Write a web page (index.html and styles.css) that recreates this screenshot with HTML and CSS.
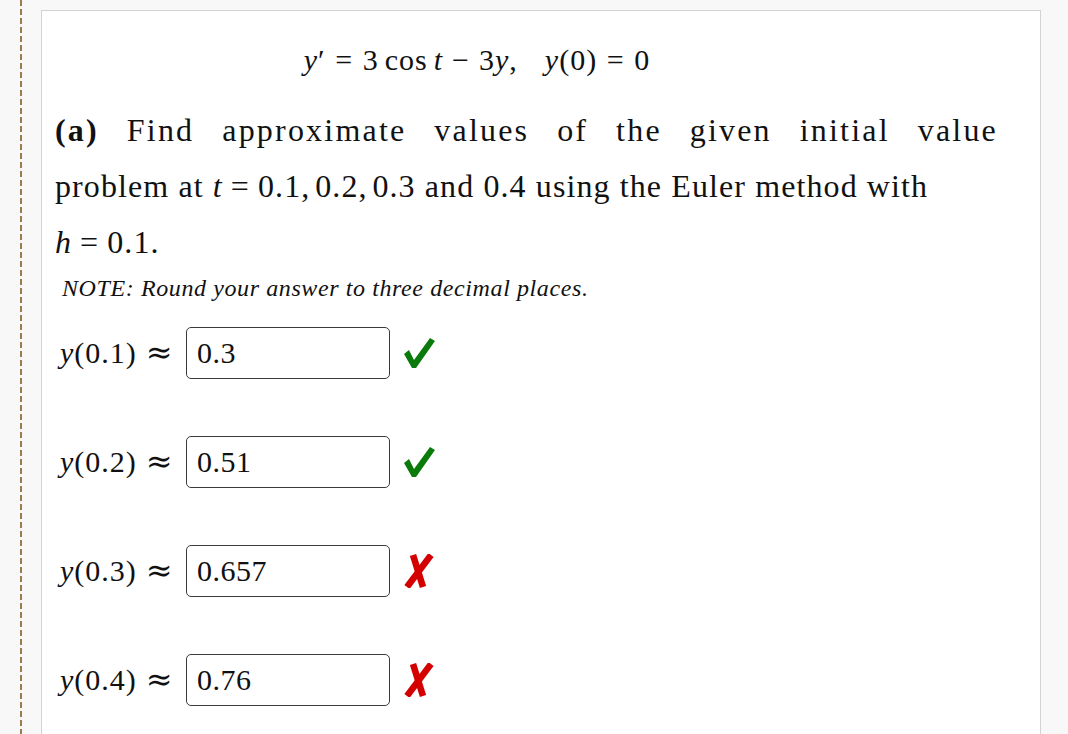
FILE: index.html
```html
<!DOCTYPE html>
<html>
<head>
<meta charset="utf-8">
<link rel="stylesheet" href="styles.css">
</head>
<body>
<div class="page">
  <div class="gutter"><div class="dashes"></div></div>
  <div class="card">
    <div class="equation"><i>y</i>′<span class="rel">=</span>3<span class="sp"></span>cos<span class="sp"></span><i>t</i><span class="bin">−</span>3<i>y</i>,<span class="wide"></span><i>y</i>(0)<span class="rel">=</span>0</div>
    <div class="question">
      <span class="line line1"><b>(a)</b> Find approximate values of the given initial value</span>
      <span class="line line2">problem at <i>t</i><span class="rel2">=</span>0.1,<span class="thin"></span>0.2,<span class="thin"></span>0.3 and 0.4 using the Euler method with</span>
      <span class="line line3"><i>h</i><span class="rel2">=</span>0.1.</span>
    </div>
    <p class="note">NOTE: Round your answer to three decimal places.</p>
    <div class="rows">
      <div class="row">
        <span class="label"><i>y</i>(0.1)<span class="approx">≈</span></span>
        <div class="input">0.3</div>
        <svg class="mark" width="32" height="32" viewBox="0 0 32 32"><polygon points="1,17 6,13 11,23 27,1 32,4 13,31 9,31" fill="#0a7a0a"/></svg>
      </div>
      <div class="row">
        <span class="label"><i>y</i>(0.2)<span class="approx">≈</span></span>
        <div class="input">0.51</div>
        <svg class="mark" width="32" height="32" viewBox="0 0 32 32"><polygon points="1,17 6,13 11,23 27,1 32,4 13,31 9,31" fill="#0a7a0a"/></svg>
      </div>
      <div class="row">
        <span class="label"><i>y</i>(0.3)<span class="approx">≈</span></span>
        <div class="input">0.657</div>
        <svg class="mark" width="32" height="34" viewBox="0 0 32 34"><line x1="10" y1="1" x2="20" y2="33" stroke="#d40000" stroke-width="6.5"/><line x1="28" y1="1" x2="4" y2="33" stroke="#d40000" stroke-width="6.5"/></svg>
      </div>
      <div class="row">
        <span class="label"><i>y</i>(0.4)<span class="approx">≈</span></span>
        <div class="input">0.76</div>
        <svg class="mark" width="32" height="34" viewBox="0 0 32 34"><line x1="10" y1="1" x2="20" y2="33" stroke="#d40000" stroke-width="6.5"/><line x1="28" y1="1" x2="4" y2="33" stroke="#d40000" stroke-width="6.5"/></svg>
      </div>
    </div>
  </div>
</div>
</body>
</html>
```
FILE: styles.css
```css
html, body {
  margin: 0;
  padding: 0;
  background: #f8f8f8;
  overflow: hidden;
}
.page {
  display: flex;
  height: 734px;
  padding-top: 10px;
  box-sizing: border-box;
  font-family: "Liberation Serif", "DejaVu Serif", serif;
  color: #111;
}
.gutter {
  width: 41px;
  margin-top: -10px;
  display: flex;
  padding-left: 20px;
  box-sizing: border-box;
}
.dashes {
  width: 2px;
  height: 100%;
  background: repeating-linear-gradient(to bottom, #9b7c4c 0 6px, transparent 6px 9px);
}
.card {
  width: 1000px;
  background: #fff;
  border: 1px solid #d3d3d3;
  border-bottom: none;
  box-sizing: border-box;
  padding: 29px 0 0 13px;
}
.rel {
  display: inline-block;
  margin: 0 0.32em;
}
.rel2 {
  display: inline-block;
  margin: 0 0.25em;
}
.bin {
  display: inline-block;
  margin: 0 0.3em;
}
.sp {
  display: inline-block;
  width: 0.2em;
}
.thin {
  display: inline-block;
  width: 0.15em;
}
.wide {
  display: inline-block;
  width: 0.9em;
}
.equation {
  width: 844px;
  text-align: center;
  font-size: 30px;
  line-height: 40px;
  height: 40px;
  letter-spacing: 1px;
}
.question {
  margin-top: 22px;
  font-size: 32px;
  line-height: 56px;
}
.line {
  display: block;
  height: 56px;
  white-space: nowrap;
}
.line1 {
  width: 943px;
  letter-spacing: 2.2px;
  text-align: justify;
  text-align-last: justify;
  white-space: normal;
}
.line2 {
  letter-spacing: 1.1px;
}
.line3 {
  letter-spacing: 1.1px;
}
.note {
  margin: 4px 0 0 7px;
  font-size: 24px;
  line-height: 28px;
  font-style: italic;
  letter-spacing: 0.6px;
}
.rows {
  margin-top: 25px;
  padding-left: 5px;
  display: flex;
  flex-direction: column;
  gap: 57px;
}
.row {
  display: flex;
  align-items: center;
  height: 52px;
}
.label {
  font-size: 30px;
  width: 126px;
  letter-spacing: 1px;
  white-space: nowrap;
}
.approx {
  font-family: "DejaVu Serif", serif;
  font-size: 32px;
  line-height: 0;
  margin-left: 9px;
}
.input {
  width: 204px;
  height: 52px;
  box-sizing: border-box;
  border: 1px solid #3a3a3a;
  border-radius: 5px;
  padding-left: 10px;
  font-family: "Liberation Serif", serif;
  font-size: 30px;
  line-height: 50px;
  letter-spacing: 0.5px;
}
.mark {
  margin-left: 13px;
}
```
